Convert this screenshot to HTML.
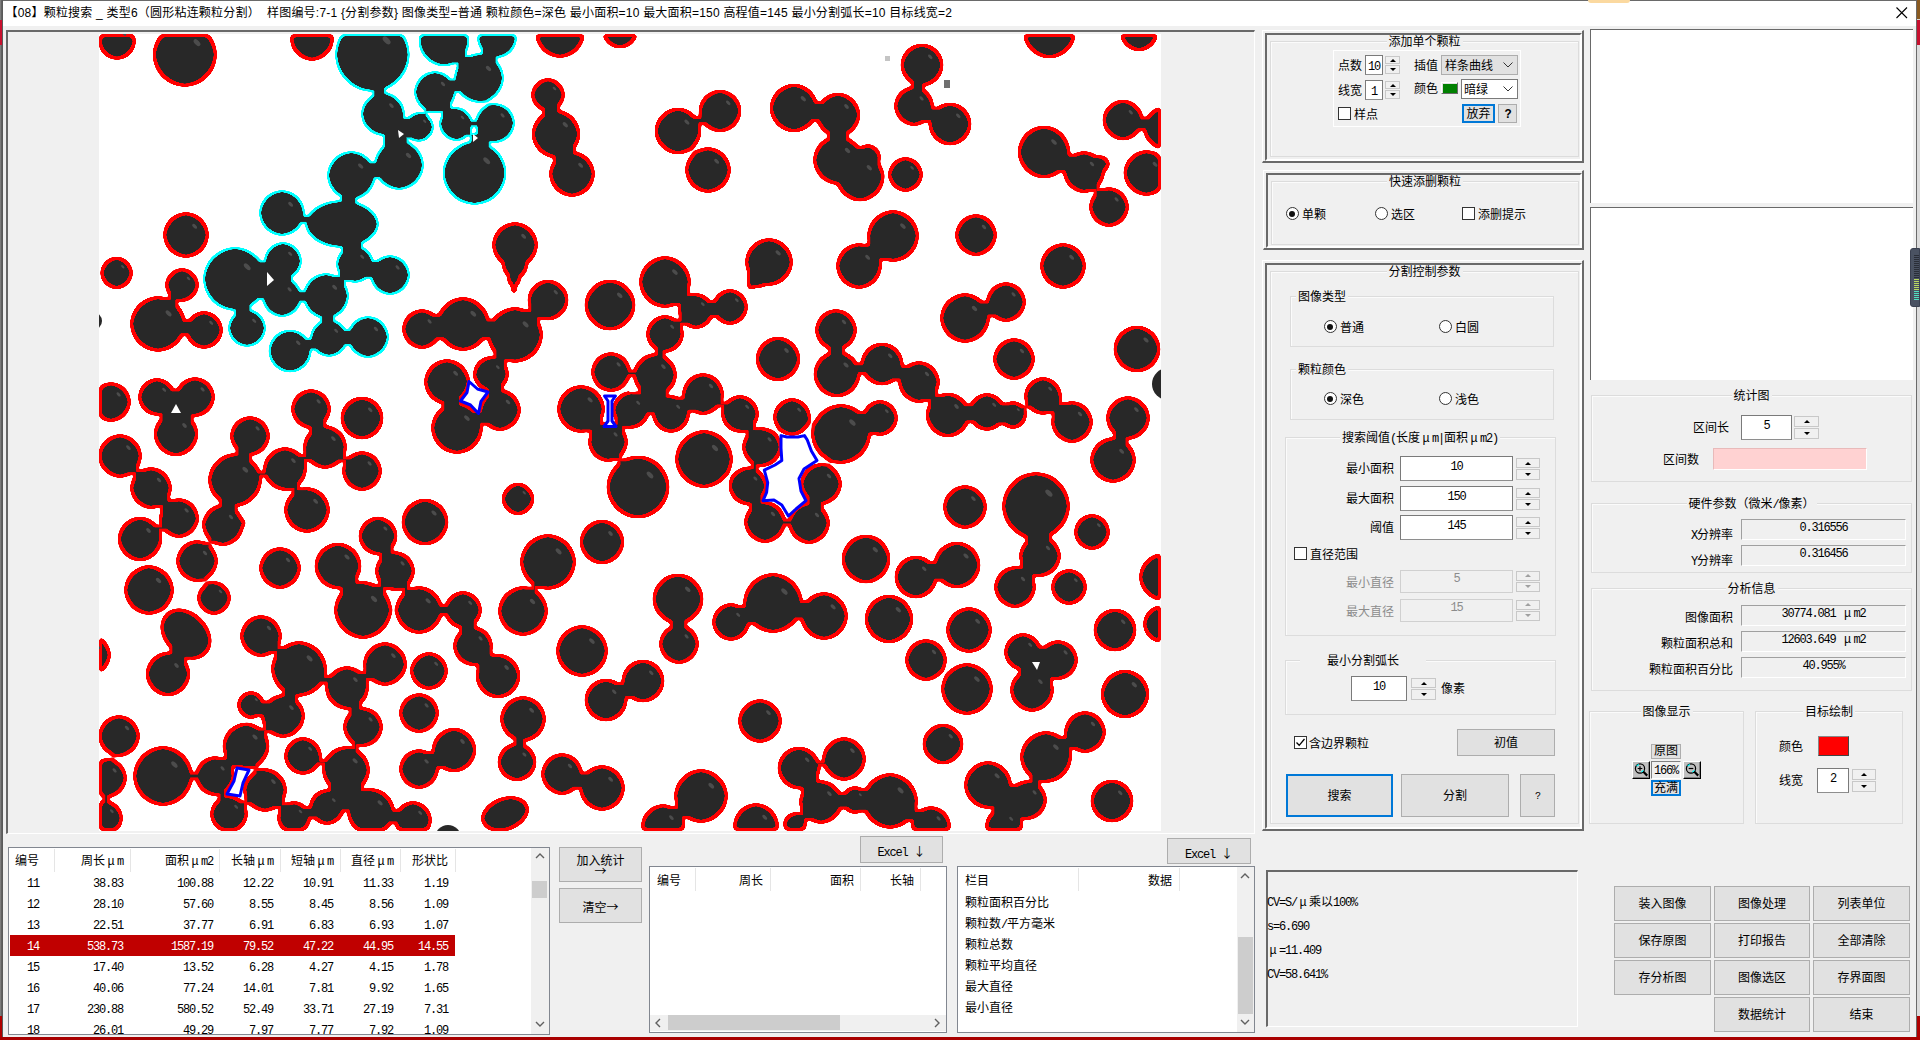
<!DOCTYPE html><html lang="zh"><head><meta charset="utf-8"><title>颗粒搜索</title><style>
html,body{margin:0;padding:0}
body{width:1920px;height:1040px;overflow:hidden;position:relative;background:#f0f0f0;font-family:"Liberation Mono","Noto Sans CJK SC",monospace;font-size:12px;color:#000}
.a{position:absolute;box-sizing:border-box}
.t{line-height:12px;white-space:nowrap;font-size:12px;padding-top:2px}
.l{letter-spacing:-1.2px}
.mu{display:inline-block;width:12px;text-align:center}
.ar{font-family:"Noto Sans CJK SC",sans-serif;letter-spacing:0}
.gb{border:1px solid #dcdcdc;box-shadow:inset 1px 1px 0 #fbfbfb}
.f3o{border-top:1px solid #fff;border-left:1px solid #fff;border-right:2px solid #696969;border-bottom:2px solid #696969}
.f3i{border-top:2px solid #696969;border-left:2px solid #696969;border-right:2px solid #fff;border-bottom:2px solid #fff}
.spb{background:#f0f0f0;border:1px solid #c8c8c8}
.ed{background:#fff;border:1px solid #7a7a7a;border-bottom-color:#8e8e8e}
.ed.dis{background:#f0f0f0;border-color:#d0d0d0;color:#8c8c8c}
.btn{background:#e1e1e1;border:1px solid #adadad;text-align:center;white-space:nowrap;font-size:12px}
.btn.foc{border:2px solid #0078d7}
.rad{border:1px solid #333;border-radius:50%;background:#fff}
.rad .dot{position:absolute;left:2.5px;top:2.5px;width:6px;height:6px;border-radius:50%;background:#111}
.chk{border:1px solid #333;background:#fff}
.sunk{border:1px solid #a0a0a0;border-right-color:#fff;border-bottom-color:#fff;background:#f0f0f0}
.lb{background:#fff;border:1px solid #828790;overflow:hidden}
.hs{position:absolute;top:2px;width:1px;height:22px;background:#e5e5e5}
</style></head><body>
<div class="a " style="left:0px;top:0px;width:3px;height:1040px;background:linear-gradient(90deg,#8a8a8a,#5a5a5a 60%,#4a4a4a)"></div>
<div class="a " style="left:0px;top:20px;width:3px;height:25px;background:#c8102e"></div>
<div class="a " style="left:0px;top:1016px;width:3px;height:24px;background:#b00000"></div>
<div class="a " style="left:0px;top:1037px;width:1920px;height:3px;background:#a80000"></div>
<div class="a " style="left:1917px;top:0px;width:3px;height:1040px;background:#dcdcdc"></div>
<div class="a " style="left:1917px;top:0px;width:3px;height:19px;background:#8a5a20"></div>
<div class="a " style="left:1917px;top:20px;width:3px;height:25px;background:#c8102e"></div>
<div class="a " style="left:1917px;top:1016px;width:3px;height:24px;background:#b00000"></div>
<div class="a " style="left:1916px;top:0px;width:1px;height:1037px;background:#6a6a6a"></div>
<div class="a " style="left:2px;top:0px;width:1px;height:1037px;background:#5a5a5a"></div>
<div class="a " style="left:3px;top:0px;width:1913px;height:26px;background:#fff;border-top:1px solid #6a6a6a"></div>
<div class="a" style="left:5.5px;top:5px;font-family:'Liberation Sans','Noto Sans CJK SC',sans-serif;font-size:12px;line-height:17px;white-space:pre;letter-spacing:0.21px" id="title">【08】颗粒搜索 _ 类型6（圆形粘连颗粒分割）  样图编号:7-1 {分割参数} 图像类型=普通 颗粒颜色=深色 最小面积=10 最大面积=150 高程值=145 最小分割弧长=10 目标线宽=2</div>
<svg class="a" style="left:1896px;top:7px" width="12" height="12" viewBox="0 0 12 12"><path d="M0.5 0.5 L11 11 M11 0.5 L0.5 11" stroke="#000" stroke-width="1.1" fill="none"/></svg>
<div class="a " style="left:1588px;top:0px;width:42px;height:3px;background:#fbd9a0;border-radius:0 0 20px 20px"></div>
<div class="a " style="left:6px;top:30px;width:1249px;height:804px;border-top:2px solid #696969;border-left:2px solid #696969;border-right:1px solid #fff;border-bottom:1px solid #fff"></div>
<svg class="a" style="left:99px;top:34px" width="1062" height="797" viewBox="99 34 1062 797">
<defs><clipPath id="ci"><rect x="99" y="34" width="1062" height="797"/></clipPath>
<filter id="gr" filterUnits="userSpaceOnUse" x="89" y="24" width="1082" height="817" color-interpolation-filters="sRGB"><feGaussianBlur in="SourceAlpha" stdDeviation="2" result="b"/><feColorMatrix in="b" type="matrix" values="0 0 0 0 0 0 0 0 0 0 0 0 0 0 0 0 0 0 20 -9.5" result="g"/><feFlood flood-color="#f00" result="c"/><feComposite in="c" in2="g" operator="in" result="o"/><feMorphology in="g" operator="erode" radius="3" result="e"/><feFlood flood-color="#282828" result="d"/><feComposite in="d" in2="e" operator="in" result="k"/><feMerge><feMergeNode in="o"/><feMergeNode in="k"/></feMerge></filter>
<filter id="gc" filterUnits="userSpaceOnUse" x="89" y="24" width="1082" height="817" color-interpolation-filters="sRGB"><feGaussianBlur in="SourceAlpha" stdDeviation="2" result="b"/><feColorMatrix in="b" type="matrix" values="0 0 0 0 0 0 0 0 0 0 0 0 0 0 0 0 0 0 20 -9.5" result="g"/><feFlood flood-color="#0ff" result="c"/><feComposite in="c" in2="g" operator="in" result="o"/><feMorphology in="g" operator="erode" radius="1.5" result="e"/><feFlood flood-color="#282828" result="d"/><feComposite in="d" in2="e" operator="in" result="k"/><feMerge><feMergeNode in="o"/><feMergeNode in="k"/></feMerge></filter>
</defs>
<rect x="99" y="34" width="1062" height="797" fill="#fff"/>
<g filter="url(#gr)"><g clip-path="url(#ci)">
<circle cx="117" cy="41" r="19"/>
<circle cx="184.8" cy="54.8" r="32.2"/>
<circle cx="312" cy="39" r="22"/>
<circle cx="186" cy="235" r="23"/>
<circle cx="560" cy="33" r="25"/>
<circle cx="620" cy="30" r="18.6"/>
<circle cx="548" cy="95" r="17"/>
<circle cx="556" cy="134" r="24.4"/>
<circle cx="572" cy="174" r="23"/>
<circle cx="678" cy="131" r="23.5"/>
<circle cx="720" cy="111" r="21.5"/>
<circle cx="708" cy="170" r="23"/>
<circle cx="794" cy="108" r="24.4"/>
<circle cx="838" cy="115" r="22.4"/>
<circle cx="838" cy="160" r="25"/>
<circle cx="860" cy="177" r="24.5"/>
<circle cx="868" cy="157" r="13"/>
<circle cx="515" cy="245" r="23"/>
<circle cx="515" cy="266" r="13"/>
<circle cx="514" cy="280" r="7"/>
<circle cx="514" cy="290" r="3.5"/>
<circle cx="922" cy="65" r="21.6"/>
<circle cx="914" cy="106" r="20"/>
<circle cx="950" cy="124" r="21.6"/>
<circle cx="905.5" cy="174.5" r="17.5"/>
<circle cx="1049.4" cy="32" r="26.6"/>
<circle cx="1139" cy="32" r="19.4"/>
<circle cx="1044" cy="152" r="26.4"/>
<circle cx="1084" cy="172" r="21"/>
<circle cx="1101" cy="164" r="9"/>
<circle cx="1109" cy="207" r="20"/>
<circle cx="1123" cy="120" r="20.6"/>
<circle cx="1165" cy="128" r="22"/>
<circle cx="1146.4" cy="173" r="23"/>
<circle cx="893" cy="236" r="26"/>
<circle cx="976" cy="235" r="21"/>
<circle cx="116.6" cy="273" r="16.4"/>
<circle cx="182" cy="285" r="17"/>
<circle cx="158" cy="324" r="28"/>
<circle cx="204" cy="330" r="19"/>
<circle cx="422" cy="329" r="20"/>
<circle cx="463" cy="324" r="27"/>
<circle cx="447" cy="382" r="23"/>
<circle cx="457" cy="428" r="26"/>
<circle cx="111" cy="402" r="20"/>
<circle cx="157" cy="397" r="19"/>
<circle cx="195" cy="397" r="20"/>
<circle cx="176" cy="434" r="22.4"/>
<circle cx="120" cy="456" r="22"/>
<circle cx="250" cy="436" r="20"/>
<circle cx="311" cy="409" r="20"/>
<circle cx="362" cy="418" r="21.6"/>
<circle cx="325" cy="447" r="22"/>
<circle cx="285" cy="469" r="22"/>
<circle cx="548" cy="300" r="20.6"/>
<circle cx="515" cy="335" r="28"/>
<circle cx="491" cy="374" r="18"/>
<circle cx="500" cy="410" r="21"/>
<circle cx="610" cy="305" r="25.6"/>
<circle cx="665" cy="282" r="26"/>
<circle cx="696" cy="311" r="18"/>
<circle cx="730" cy="307" r="18"/>
<circle cx="665" cy="334" r="19"/>
<circle cx="769" cy="262" r="24"/>
<circle cx="759" cy="276" r="12"/>
<circle cx="753" cy="283" r="6"/>
<circle cx="750" cy="287" r="3"/>
<circle cx="859" cy="266" r="23"/>
<circle cx="836" cy="330" r="21"/>
<circle cx="837" cy="374" r="23.6"/>
<circle cx="778" cy="359" r="22.4"/>
<circle cx="611" cy="372" r="20"/>
<circle cx="655" cy="375" r="22"/>
<circle cx="581" cy="409" r="24"/>
<circle cx="631" cy="410" r="19"/>
<circle cx="671" cy="414" r="19"/>
<circle cx="703" cy="394" r="21"/>
<circle cx="608" cy="442" r="20"/>
<circle cx="740" cy="414" r="19"/>
<circle cx="792" cy="417" r="19"/>
<circle cx="841" cy="434" r="30"/>
<circle cx="704" cy="459" r="29"/>
<circle cx="762" cy="447" r="20"/>
<circle cx="1063" cy="266" r="23"/>
<circle cx="965" cy="318" r="25"/>
<circle cx="1006" cy="302" r="20"/>
<circle cx="1014" cy="359" r="21"/>
<circle cx="1137" cy="349" r="23.6"/>
<circle cx="882" cy="364" r="21.6"/>
<circle cx="919" cy="382" r="21"/>
<circle cx="948" cy="415" r="22.4"/>
<circle cx="987" cy="412" r="19"/>
<circle cx="1013" cy="415" r="14"/>
<circle cx="880" cy="418" r="18"/>
<circle cx="1043" cy="396" r="19"/>
<circle cx="1072" cy="422" r="21"/>
<circle cx="1128" cy="418" r="22"/>
<circle cx="1113" cy="460" r="23"/>
<circle cx="151" cy="488" r="21"/>
<circle cx="179" cy="518" r="20"/>
<circle cx="140" cy="539" r="22.4"/>
<circle cx="235" cy="480" r="27"/>
<circle cx="223" cy="525" r="21"/>
<circle cx="241" cy="523" r="5"/>
<circle cx="197" cy="561" r="21"/>
<circle cx="362" cy="471" r="20"/>
<circle cx="307" cy="510" r="23"/>
<circle cx="280" cy="568" r="21"/>
<circle cx="425" cy="522" r="23.6"/>
<circle cx="378" cy="536" r="19.6"/>
<circle cx="338" cy="566" r="23.6"/>
<circle cx="395" cy="571" r="20"/>
<circle cx="363" cy="610" r="29"/>
<circle cx="419" cy="610" r="24"/>
<circle cx="463" cy="610" r="19"/>
<circle cx="473" cy="646" r="20"/>
<circle cx="149" cy="590" r="25"/>
<circle cx="214" cy="598" r="17"/>
<circle cx="261" cy="636" r="21"/>
<circle cx="299" cy="669" r="28"/>
<circle cx="385" cy="664" r="22"/>
<circle cx="90" cy="655" r="21"/>
<circle cx="638" cy="487" r="31.6"/>
<circle cx="518" cy="499" r="16.4"/>
<circle cx="748" cy="486" r="19.5"/>
<circle cx="765" cy="522" r="21"/>
<circle cx="809" cy="523" r="21"/>
<circle cx="821" cy="484" r="21"/>
<circle cx="866" cy="559" r="24.5"/>
<circle cx="548" cy="562" r="28"/>
<circle cx="602" cy="542" r="22.4"/>
<circle cx="523" cy="611" r="25"/>
<circle cx="582" cy="651" r="26"/>
<circle cx="678" cy="599" r="25.6"/>
<circle cx="679" cy="644" r="20"/>
<circle cx="731" cy="622" r="19"/>
<circle cx="773" cy="603" r="30"/>
<circle cx="824" cy="616" r="24"/>
<circle cx="965" cy="507" r="22"/>
<circle cx="1036" cy="506" r="34"/>
<circle cx="1040" cy="556" r="21"/>
<circle cx="1015" cy="587" r="21"/>
<circle cx="1092" cy="532" r="18"/>
<circle cx="1069" cy="587" r="18"/>
<circle cx="916" cy="577" r="21.6"/>
<circle cx="957" cy="565" r="23.6"/>
<circle cx="889" cy="619" r="24.4"/>
<circle cx="969" cy="630" r="23"/>
<circle cx="926" cy="660" r="21"/>
<circle cx="1023" cy="652" r="19"/>
<circle cx="1058" cy="660" r="20"/>
<circle cx="1115" cy="630" r="21.6"/>
<circle cx="1163" cy="577" r="24"/>
<circle cx="1162" cy="624" r="19"/>
<circle cx="168" cy="674" r="22.4"/>
<circle cx="119" cy="736" r="21"/>
<circle cx="107" cy="778" r="20"/>
<circle cx="105" cy="818" r="18"/>
<circle cx="163" cy="776" r="30"/>
<circle cx="246" cy="746" r="23.6"/>
<circle cx="215" cy="776" r="20"/>
<circle cx="265" cy="790" r="22"/>
<circle cx="229" cy="814" r="19"/>
<circle cx="251" cy="705" r="14"/>
<circle cx="283" cy="716" r="22"/>
<circle cx="347" cy="688" r="22"/>
<circle cx="429" cy="671" r="19"/>
<circle cx="363" cy="727" r="20"/>
<circle cx="303" cy="756" r="19"/>
<circle cx="346" cy="770" r="24"/>
<circle cx="327" cy="807" r="18"/>
<circle cx="419" cy="713" r="20"/>
<circle cx="454" cy="750" r="22.4"/>
<circle cx="419" cy="769" r="20"/>
<circle cx="294" cy="818" r="17"/>
<circle cx="371" cy="812" r="24"/>
<circle cx="413" cy="820" r="19"/>
<circle cx="498" cy="676" r="22.5"/>
<circle cx="523" cy="719" r="23"/>
<circle cx="517" cy="762" r="19.6"/>
<circle cx="606" cy="700" r="21.6"/>
<circle cx="643" cy="681" r="21.6"/>
<circle cx="760" cy="721" r="22"/>
<circle cx="562" cy="774" r="21"/>
<circle cx="602" cy="788" r="23"/>
<circle cx="701" cy="796" r="27"/>
<circle cx="663" cy="826" r="22"/>
<circle cx="756" cy="826" r="23"/>
<circle cx="799" cy="768" r="21.6"/>
<circle cx="844" cy="759" r="22"/>
<circle cx="821" cy="802" r="22"/>
<circle cx="855" cy="800" r="14"/>
<circle cx="795" cy="824" r="12"/>
<circle cx="652" cy="400" r="8"/>
<circle cx="176" cy="410" r="7"/>
<circle cx="1036" cy="666" r="5"/>
<circle cx="347" cy="798" r="6"/>
<circle cx="1005" cy="804" r="5"/>
<circle cx="967" cy="689" r="26"/>
<circle cx="1032" cy="690" r="22"/>
<circle cx="1125" cy="694" r="24.4"/>
<circle cx="943" cy="744" r="20.6"/>
<circle cx="1085" cy="732" r="21"/>
<circle cx="1046" cy="757" r="26"/>
<circle cx="988" cy="785" r="24"/>
<circle cx="1027" cy="800" r="20"/>
<circle cx="1004" cy="826" r="19"/>
<circle cx="1112" cy="801" r="21.6"/>
<circle cx="890" cy="801" r="28"/>
<circle cx="931" cy="826" r="20"/>
<ellipse cx="505" cy="814" rx="25" ry="17" transform="rotate(-20 505 814)"/>
<ellipse cx="186" cy="634" rx="29" ry="22" transform="rotate(45 186 634)"/>
</g></g>
<g filter="url(#gc)"><g clip-path="url(#ci)">
<circle cx="372.4" cy="54.6" r="37.4"/>
<circle cx="444" cy="41" r="25.5"/>
<circle cx="497" cy="38" r="20"/>
<circle cx="435" cy="92" r="21"/>
<circle cx="383" cy="114" r="22"/>
<circle cx="419" cy="127" r="15"/>
<circle cx="399" cy="165" r="25"/>
<circle cx="395" cy="142" r="12"/>
<circle cx="351.4" cy="175.4" r="24.4"/>
<circle cx="282" cy="213" r="23"/>
<circle cx="456" cy="124" r="17"/>
<circle cx="474.5" cy="173" r="32"/>
<circle cx="479" cy="78" r="25"/>
<circle cx="495" cy="123" r="20"/>
<circle cx="235" cy="279" r="32"/>
<circle cx="283" cy="261" r="19"/>
<circle cx="282" cy="297" r="20"/>
<circle cx="247" cy="328" r="19"/>
<circle cx="326" cy="296" r="23"/>
<circle cx="355" cy="264" r="19"/>
<circle cx="390" cy="275" r="20"/>
<circle cx="329" cy="338" r="19"/>
<circle cx="290" cy="351" r="21.6"/>
<circle cx="368" cy="337" r="21"/>
<circle cx="270" cy="279" r="6"/>
<circle cx="400" cy="134" r="5"/>
<circle cx="475" cy="138" r="5"/>
<ellipse cx="342" cy="224" rx="37" ry="24" transform="rotate(0 342 224)"/>
</g></g>
<g fill="#282828">
<circle cx="93" cy="321" r="9"/>
<circle cx="1168" cy="384" r="16"/>
<circle cx="448" cy="838" r="13"/>
</g>
<g fill="#4c4c4c">
<ellipse cx="124.2" cy="33.8" rx="2.5" ry="1.3" transform="rotate(45 124.2 33.8)"/>
<ellipse cx="197" cy="42.6" rx="4.2" ry="2.3" transform="rotate(45 197 42.6)"/>
<ellipse cx="320.4" cy="30.6" rx="2.9" ry="1.5" transform="rotate(45 320.4 30.6)"/>
<ellipse cx="194.7" cy="226.3" rx="3" ry="1.6" transform="rotate(45 194.7 226.3)"/>
<ellipse cx="569.5" cy="23.5" rx="3.2" ry="1.8" transform="rotate(45 569.5 23.5)"/>
<ellipse cx="627.1" cy="22.9" rx="2.4" ry="1.3" transform="rotate(45 627.1 22.9)"/>
<ellipse cx="554.5" cy="88.5" rx="2.2" ry="1.2" transform="rotate(45 554.5 88.5)"/>
<ellipse cx="565.3" cy="124.7" rx="3.2" ry="1.7" transform="rotate(45 565.3 124.7)"/>
<ellipse cx="580.7" cy="165.3" rx="3" ry="1.6" transform="rotate(45 580.7 165.3)"/>
<ellipse cx="686.9" cy="122.1" rx="3.1" ry="1.6" transform="rotate(45 686.9 122.1)"/>
<ellipse cx="728.2" cy="102.8" rx="2.8" ry="1.5" transform="rotate(45 728.2 102.8)"/>
<ellipse cx="716.7" cy="161.3" rx="3" ry="1.6" transform="rotate(45 716.7 161.3)"/>
<ellipse cx="803.3" cy="98.7" rx="3.2" ry="1.7" transform="rotate(45 803.3 98.7)"/>
<ellipse cx="846.5" cy="106.5" rx="2.9" ry="1.6" transform="rotate(45 846.5 106.5)"/>
<ellipse cx="847.5" cy="150.5" rx="3.2" ry="1.8" transform="rotate(45 847.5 150.5)"/>
<ellipse cx="869.3" cy="167.7" rx="3.2" ry="1.7" transform="rotate(45 869.3 167.7)"/>
<ellipse cx="523.7" cy="236.3" rx="3" ry="1.6" transform="rotate(45 523.7 236.3)"/>
<ellipse cx="930.2" cy="56.8" rx="2.8" ry="1.5" transform="rotate(45 930.2 56.8)"/>
<ellipse cx="921.6" cy="98.4" rx="2.6" ry="1.4" transform="rotate(45 921.6 98.4)"/>
<ellipse cx="958.2" cy="115.8" rx="2.8" ry="1.5" transform="rotate(45 958.2 115.8)"/>
<ellipse cx="912.1" cy="167.8" rx="2.3" ry="1.2" transform="rotate(45 912.1 167.8)"/>
<ellipse cx="1059.5" cy="21.9" rx="3.5" ry="1.9" transform="rotate(45 1059.5 21.9)"/>
<ellipse cx="1146.4" cy="24.6" rx="2.5" ry="1.4" transform="rotate(45 1146.4 24.6)"/>
<ellipse cx="1054" cy="142" rx="3.4" ry="1.8" transform="rotate(45 1054 142)"/>
<ellipse cx="1092" cy="164" rx="2.7" ry="1.5" transform="rotate(45 1092 164)"/>
<ellipse cx="1116.6" cy="199.4" rx="2.6" ry="1.4" transform="rotate(45 1116.6 199.4)"/>
<ellipse cx="1130.8" cy="112.2" rx="2.7" ry="1.4" transform="rotate(45 1130.8 112.2)"/>
<ellipse cx="1173.4" cy="119.6" rx="2.9" ry="1.5" transform="rotate(45 1173.4 119.6)"/>
<ellipse cx="1155.1" cy="164.3" rx="3" ry="1.6" transform="rotate(45 1155.1 164.3)"/>
<ellipse cx="902.9" cy="226.1" rx="3.4" ry="1.8" transform="rotate(45 902.9 226.1)"/>
<ellipse cx="984" cy="227" rx="2.7" ry="1.5" transform="rotate(45 984 227)"/>
<ellipse cx="122.8" cy="266.8" rx="2.1" ry="1.1" transform="rotate(45 122.8 266.8)"/>
<ellipse cx="188.5" cy="278.5" rx="2.2" ry="1.2" transform="rotate(45 188.5 278.5)"/>
<ellipse cx="168.6" cy="313.4" rx="3.6" ry="2" transform="rotate(45 168.6 313.4)"/>
<ellipse cx="211.2" cy="322.8" rx="2.5" ry="1.3" transform="rotate(45 211.2 322.8)"/>
<ellipse cx="429.6" cy="321.4" rx="2.6" ry="1.4" transform="rotate(45 429.6 321.4)"/>
<ellipse cx="473.3" cy="313.7" rx="3.5" ry="1.9" transform="rotate(45 473.3 313.7)"/>
<ellipse cx="455.7" cy="373.3" rx="3" ry="1.6" transform="rotate(45 455.7 373.3)"/>
<ellipse cx="466.9" cy="418.1" rx="3.4" ry="1.8" transform="rotate(45 466.9 418.1)"/>
<ellipse cx="118.6" cy="394.4" rx="2.6" ry="1.4" transform="rotate(45 118.6 394.4)"/>
<ellipse cx="164.2" cy="389.8" rx="2.5" ry="1.3" transform="rotate(45 164.2 389.8)"/>
<ellipse cx="202.6" cy="389.4" rx="2.6" ry="1.4" transform="rotate(45 202.6 389.4)"/>
<ellipse cx="184.5" cy="425.5" rx="2.9" ry="1.6" transform="rotate(45 184.5 425.5)"/>
<ellipse cx="128.4" cy="447.6" rx="2.9" ry="1.5" transform="rotate(45 128.4 447.6)"/>
<ellipse cx="257.6" cy="428.4" rx="2.6" ry="1.4" transform="rotate(45 257.6 428.4)"/>
<ellipse cx="318.6" cy="401.4" rx="2.6" ry="1.4" transform="rotate(45 318.6 401.4)"/>
<ellipse cx="370.2" cy="409.8" rx="2.8" ry="1.5" transform="rotate(45 370.2 409.8)"/>
<ellipse cx="333.4" cy="438.6" rx="2.9" ry="1.5" transform="rotate(45 333.4 438.6)"/>
<ellipse cx="293.4" cy="460.6" rx="2.9" ry="1.5" transform="rotate(45 293.4 460.6)"/>
<ellipse cx="555.8" cy="292.2" rx="2.7" ry="1.4" transform="rotate(45 555.8 292.2)"/>
<ellipse cx="525.6" cy="324.4" rx="3.6" ry="2" transform="rotate(45 525.6 324.4)"/>
<ellipse cx="497.8" cy="367.2" rx="2.3" ry="1.3" transform="rotate(45 497.8 367.2)"/>
<ellipse cx="508" cy="402" rx="2.7" ry="1.5" transform="rotate(45 508 402)"/>
<ellipse cx="619.7" cy="295.3" rx="3.3" ry="1.8" transform="rotate(45 619.7 295.3)"/>
<ellipse cx="674.9" cy="272.1" rx="3.4" ry="1.8" transform="rotate(45 674.9 272.1)"/>
<ellipse cx="702.8" cy="304.2" rx="2.3" ry="1.3" transform="rotate(45 702.8 304.2)"/>
<ellipse cx="736.8" cy="300.2" rx="2.3" ry="1.3" transform="rotate(45 736.8 300.2)"/>
<ellipse cx="672.2" cy="326.8" rx="2.5" ry="1.3" transform="rotate(45 672.2 326.8)"/>
<ellipse cx="778.1" cy="252.9" rx="3.1" ry="1.7" transform="rotate(45 778.1 252.9)"/>
<ellipse cx="867.7" cy="257.3" rx="3" ry="1.6" transform="rotate(45 867.7 257.3)"/>
<ellipse cx="844" cy="322" rx="2.7" ry="1.5" transform="rotate(45 844 322)"/>
<ellipse cx="846" cy="365" rx="3.1" ry="1.7" transform="rotate(45 846 365)"/>
<ellipse cx="786.5" cy="350.5" rx="2.9" ry="1.6" transform="rotate(45 786.5 350.5)"/>
<ellipse cx="618.6" cy="364.4" rx="2.6" ry="1.4" transform="rotate(45 618.6 364.4)"/>
<ellipse cx="663.4" cy="366.6" rx="2.9" ry="1.5" transform="rotate(45 663.4 366.6)"/>
<ellipse cx="590.1" cy="399.9" rx="3.1" ry="1.7" transform="rotate(45 590.1 399.9)"/>
<ellipse cx="638.2" cy="402.8" rx="2.5" ry="1.3" transform="rotate(45 638.2 402.8)"/>
<ellipse cx="678.2" cy="406.8" rx="2.5" ry="1.3" transform="rotate(45 678.2 406.8)"/>
<ellipse cx="711" cy="386" rx="2.7" ry="1.5" transform="rotate(45 711 386)"/>
<ellipse cx="615.6" cy="434.4" rx="2.6" ry="1.4" transform="rotate(45 615.6 434.4)"/>
<ellipse cx="747.2" cy="406.8" rx="2.5" ry="1.3" transform="rotate(45 747.2 406.8)"/>
<ellipse cx="799.2" cy="409.8" rx="2.5" ry="1.3" transform="rotate(45 799.2 409.8)"/>
<ellipse cx="852.4" cy="422.6" rx="3.9" ry="2.1" transform="rotate(45 852.4 422.6)"/>
<ellipse cx="715" cy="448" rx="3.8" ry="2" transform="rotate(45 715 448)"/>
<ellipse cx="769.6" cy="439.4" rx="2.6" ry="1.4" transform="rotate(45 769.6 439.4)"/>
<ellipse cx="1071.7" cy="257.3" rx="3" ry="1.6" transform="rotate(45 1071.7 257.3)"/>
<ellipse cx="974.5" cy="308.5" rx="3.2" ry="1.8" transform="rotate(45 974.5 308.5)"/>
<ellipse cx="1013.6" cy="294.4" rx="2.6" ry="1.4" transform="rotate(45 1013.6 294.4)"/>
<ellipse cx="1022" cy="351" rx="2.7" ry="1.5" transform="rotate(45 1022 351)"/>
<ellipse cx="1146" cy="340" rx="3.1" ry="1.7" transform="rotate(45 1146 340)"/>
<ellipse cx="890.2" cy="355.8" rx="2.8" ry="1.5" transform="rotate(45 890.2 355.8)"/>
<ellipse cx="927" cy="374" rx="2.7" ry="1.5" transform="rotate(45 927 374)"/>
<ellipse cx="956.5" cy="406.5" rx="2.9" ry="1.6" transform="rotate(45 956.5 406.5)"/>
<ellipse cx="994.2" cy="404.8" rx="2.5" ry="1.3" transform="rotate(45 994.2 404.8)"/>
<ellipse cx="1018.3" cy="409.7" rx="1.8" ry="1" transform="rotate(45 1018.3 409.7)"/>
<ellipse cx="886.8" cy="411.2" rx="2.3" ry="1.3" transform="rotate(45 886.8 411.2)"/>
<ellipse cx="1050.2" cy="388.8" rx="2.5" ry="1.3" transform="rotate(45 1050.2 388.8)"/>
<ellipse cx="1080" cy="414" rx="2.7" ry="1.5" transform="rotate(45 1080 414)"/>
<ellipse cx="1136.4" cy="409.6" rx="2.9" ry="1.5" transform="rotate(45 1136.4 409.6)"/>
<ellipse cx="1121.7" cy="451.3" rx="3" ry="1.6" transform="rotate(45 1121.7 451.3)"/>
<ellipse cx="159" cy="480" rx="2.7" ry="1.5" transform="rotate(45 159 480)"/>
<ellipse cx="186.6" cy="510.4" rx="2.6" ry="1.4" transform="rotate(45 186.6 510.4)"/>
<ellipse cx="148.5" cy="530.5" rx="2.9" ry="1.6" transform="rotate(45 148.5 530.5)"/>
<ellipse cx="245.3" cy="469.7" rx="3.5" ry="1.9" transform="rotate(45 245.3 469.7)"/>
<ellipse cx="231" cy="517" rx="2.7" ry="1.5" transform="rotate(45 231 517)"/>
<ellipse cx="205" cy="553" rx="2.7" ry="1.5" transform="rotate(45 205 553)"/>
<ellipse cx="369.6" cy="463.4" rx="2.6" ry="1.4" transform="rotate(45 369.6 463.4)"/>
<ellipse cx="315.7" cy="501.3" rx="3" ry="1.6" transform="rotate(45 315.7 501.3)"/>
<ellipse cx="288" cy="560" rx="2.7" ry="1.5" transform="rotate(45 288 560)"/>
<ellipse cx="434" cy="513" rx="3.1" ry="1.7" transform="rotate(45 434 513)"/>
<ellipse cx="385.4" cy="528.6" rx="2.5" ry="1.4" transform="rotate(45 385.4 528.6)"/>
<ellipse cx="347" cy="557" rx="3.1" ry="1.7" transform="rotate(45 347 557)"/>
<ellipse cx="402.6" cy="563.4" rx="2.6" ry="1.4" transform="rotate(45 402.6 563.4)"/>
<ellipse cx="374" cy="599" rx="3.8" ry="2" transform="rotate(45 374 599)"/>
<ellipse cx="428.1" cy="600.9" rx="3.1" ry="1.7" transform="rotate(45 428.1 600.9)"/>
<ellipse cx="470.2" cy="602.8" rx="2.5" ry="1.3" transform="rotate(45 470.2 602.8)"/>
<ellipse cx="480.6" cy="638.4" rx="2.6" ry="1.4" transform="rotate(45 480.6 638.4)"/>
<ellipse cx="158.5" cy="580.5" rx="3.2" ry="1.8" transform="rotate(45 158.5 580.5)"/>
<ellipse cx="220.5" cy="591.5" rx="2.2" ry="1.2" transform="rotate(45 220.5 591.5)"/>
<ellipse cx="269" cy="628" rx="2.7" ry="1.5" transform="rotate(45 269 628)"/>
<ellipse cx="309.6" cy="658.4" rx="3.6" ry="2" transform="rotate(45 309.6 658.4)"/>
<ellipse cx="393.4" cy="655.6" rx="2.9" ry="1.5" transform="rotate(45 393.4 655.6)"/>
<ellipse cx="98" cy="647" rx="2.7" ry="1.5" transform="rotate(45 98 647)"/>
<ellipse cx="650" cy="475" rx="4.1" ry="2.2" transform="rotate(45 650 475)"/>
<ellipse cx="524.2" cy="492.8" rx="2.1" ry="1.1" transform="rotate(45 524.2 492.8)"/>
<ellipse cx="755.4" cy="478.6" rx="2.5" ry="1.4" transform="rotate(45 755.4 478.6)"/>
<ellipse cx="773" cy="514" rx="2.7" ry="1.5" transform="rotate(45 773 514)"/>
<ellipse cx="817" cy="515" rx="2.7" ry="1.5" transform="rotate(45 817 515)"/>
<ellipse cx="829" cy="476" rx="2.7" ry="1.5" transform="rotate(45 829 476)"/>
<ellipse cx="875.3" cy="549.7" rx="3.2" ry="1.7" transform="rotate(45 875.3 549.7)"/>
<ellipse cx="558.6" cy="551.4" rx="3.6" ry="2" transform="rotate(45 558.6 551.4)"/>
<ellipse cx="610.5" cy="533.5" rx="2.9" ry="1.6" transform="rotate(45 610.5 533.5)"/>
<ellipse cx="532.5" cy="601.5" rx="3.2" ry="1.8" transform="rotate(45 532.5 601.5)"/>
<ellipse cx="591.9" cy="641.1" rx="3.4" ry="1.8" transform="rotate(45 591.9 641.1)"/>
<ellipse cx="687.7" cy="589.3" rx="3.3" ry="1.8" transform="rotate(45 687.7 589.3)"/>
<ellipse cx="686.6" cy="636.4" rx="2.6" ry="1.4" transform="rotate(45 686.6 636.4)"/>
<ellipse cx="738.2" cy="614.8" rx="2.5" ry="1.3" transform="rotate(45 738.2 614.8)"/>
<ellipse cx="784.4" cy="591.6" rx="3.9" ry="2.1" transform="rotate(45 784.4 591.6)"/>
<ellipse cx="833.1" cy="606.9" rx="3.1" ry="1.7" transform="rotate(45 833.1 606.9)"/>
<ellipse cx="973.4" cy="498.6" rx="2.9" ry="1.5" transform="rotate(45 973.4 498.6)"/>
<ellipse cx="1048.9" cy="493.1" rx="4.4" ry="2.4" transform="rotate(45 1048.9 493.1)"/>
<ellipse cx="1048" cy="548" rx="2.7" ry="1.5" transform="rotate(45 1048 548)"/>
<ellipse cx="1023" cy="579" rx="2.7" ry="1.5" transform="rotate(45 1023 579)"/>
<ellipse cx="1098.8" cy="525.2" rx="2.3" ry="1.3" transform="rotate(45 1098.8 525.2)"/>
<ellipse cx="1075.8" cy="580.2" rx="2.3" ry="1.3" transform="rotate(45 1075.8 580.2)"/>
<ellipse cx="924.2" cy="568.8" rx="2.8" ry="1.5" transform="rotate(45 924.2 568.8)"/>
<ellipse cx="966" cy="556" rx="3.1" ry="1.7" transform="rotate(45 966 556)"/>
<ellipse cx="898.3" cy="609.7" rx="3.2" ry="1.7" transform="rotate(45 898.3 609.7)"/>
<ellipse cx="977.7" cy="621.3" rx="3" ry="1.6" transform="rotate(45 977.7 621.3)"/>
<ellipse cx="934" cy="652" rx="2.7" ry="1.5" transform="rotate(45 934 652)"/>
<ellipse cx="1030.2" cy="644.8" rx="2.5" ry="1.3" transform="rotate(45 1030.2 644.8)"/>
<ellipse cx="1065.6" cy="652.4" rx="2.6" ry="1.4" transform="rotate(45 1065.6 652.4)"/>
<ellipse cx="1123.2" cy="621.8" rx="2.8" ry="1.5" transform="rotate(45 1123.2 621.8)"/>
<ellipse cx="1172.1" cy="567.9" rx="3.1" ry="1.7" transform="rotate(45 1172.1 567.9)"/>
<ellipse cx="1169.2" cy="616.8" rx="2.5" ry="1.3" transform="rotate(45 1169.2 616.8)"/>
<ellipse cx="176.5" cy="665.5" rx="2.9" ry="1.6" transform="rotate(45 176.5 665.5)"/>
<ellipse cx="127" cy="728" rx="2.7" ry="1.5" transform="rotate(45 127 728)"/>
<ellipse cx="114.6" cy="770.4" rx="2.6" ry="1.4" transform="rotate(45 114.6 770.4)"/>
<ellipse cx="111.8" cy="811.2" rx="2.3" ry="1.3" transform="rotate(45 111.8 811.2)"/>
<ellipse cx="174.4" cy="764.6" rx="3.9" ry="2.1" transform="rotate(45 174.4 764.6)"/>
<ellipse cx="255" cy="737" rx="3.1" ry="1.7" transform="rotate(45 255 737)"/>
<ellipse cx="222.6" cy="768.4" rx="2.6" ry="1.4" transform="rotate(45 222.6 768.4)"/>
<ellipse cx="273.4" cy="781.6" rx="2.9" ry="1.5" transform="rotate(45 273.4 781.6)"/>
<ellipse cx="236.2" cy="806.8" rx="2.5" ry="1.3" transform="rotate(45 236.2 806.8)"/>
<ellipse cx="256.3" cy="699.7" rx="1.8" ry="1" transform="rotate(45 256.3 699.7)"/>
<ellipse cx="291.4" cy="707.6" rx="2.9" ry="1.5" transform="rotate(45 291.4 707.6)"/>
<ellipse cx="355.4" cy="679.6" rx="2.9" ry="1.5" transform="rotate(45 355.4 679.6)"/>
<ellipse cx="436.2" cy="663.8" rx="2.5" ry="1.3" transform="rotate(45 436.2 663.8)"/>
<ellipse cx="370.6" cy="719.4" rx="2.6" ry="1.4" transform="rotate(45 370.6 719.4)"/>
<ellipse cx="310.2" cy="748.8" rx="2.5" ry="1.3" transform="rotate(45 310.2 748.8)"/>
<ellipse cx="355.1" cy="760.9" rx="3.1" ry="1.7" transform="rotate(45 355.1 760.9)"/>
<ellipse cx="333.8" cy="800.2" rx="2.3" ry="1.3" transform="rotate(45 333.8 800.2)"/>
<ellipse cx="426.6" cy="705.4" rx="2.6" ry="1.4" transform="rotate(45 426.6 705.4)"/>
<ellipse cx="462.5" cy="741.5" rx="2.9" ry="1.6" transform="rotate(45 462.5 741.5)"/>
<ellipse cx="426.6" cy="761.4" rx="2.6" ry="1.4" transform="rotate(45 426.6 761.4)"/>
<ellipse cx="300.5" cy="811.5" rx="2.2" ry="1.2" transform="rotate(45 300.5 811.5)"/>
<ellipse cx="380.1" cy="802.9" rx="3.1" ry="1.7" transform="rotate(45 380.1 802.9)"/>
<ellipse cx="420.2" cy="812.8" rx="2.5" ry="1.3" transform="rotate(45 420.2 812.8)"/>
<ellipse cx="506.6" cy="667.5" rx="2.9" ry="1.6" transform="rotate(45 506.6 667.5)"/>
<ellipse cx="531.7" cy="710.3" rx="3" ry="1.6" transform="rotate(45 531.7 710.3)"/>
<ellipse cx="524.4" cy="754.6" rx="2.5" ry="1.4" transform="rotate(45 524.4 754.6)"/>
<ellipse cx="614.2" cy="691.8" rx="2.8" ry="1.5" transform="rotate(45 614.2 691.8)"/>
<ellipse cx="651.2" cy="672.8" rx="2.8" ry="1.5" transform="rotate(45 651.2 672.8)"/>
<ellipse cx="768.4" cy="712.6" rx="2.9" ry="1.5" transform="rotate(45 768.4 712.6)"/>
<ellipse cx="570" cy="766" rx="2.7" ry="1.5" transform="rotate(45 570 766)"/>
<ellipse cx="610.7" cy="779.3" rx="3" ry="1.6" transform="rotate(45 610.7 779.3)"/>
<ellipse cx="711.3" cy="785.7" rx="3.5" ry="1.9" transform="rotate(45 711.3 785.7)"/>
<ellipse cx="671.4" cy="817.6" rx="2.9" ry="1.5" transform="rotate(45 671.4 817.6)"/>
<ellipse cx="764.7" cy="817.3" rx="3" ry="1.6" transform="rotate(45 764.7 817.3)"/>
<ellipse cx="807.2" cy="759.8" rx="2.8" ry="1.5" transform="rotate(45 807.2 759.8)"/>
<ellipse cx="852.4" cy="750.6" rx="2.9" ry="1.5" transform="rotate(45 852.4 750.6)"/>
<ellipse cx="829.4" cy="793.6" rx="2.9" ry="1.5" transform="rotate(45 829.4 793.6)"/>
<ellipse cx="860.3" cy="794.7" rx="1.8" ry="1" transform="rotate(45 860.3 794.7)"/>
<ellipse cx="976.9" cy="679.1" rx="3.4" ry="1.8" transform="rotate(45 976.9 679.1)"/>
<ellipse cx="1040.4" cy="681.6" rx="2.9" ry="1.5" transform="rotate(45 1040.4 681.6)"/>
<ellipse cx="1134.3" cy="684.7" rx="3.2" ry="1.7" transform="rotate(45 1134.3 684.7)"/>
<ellipse cx="950.8" cy="736.2" rx="2.7" ry="1.4" transform="rotate(45 950.8 736.2)"/>
<ellipse cx="1093" cy="724" rx="2.7" ry="1.5" transform="rotate(45 1093 724)"/>
<ellipse cx="1055.9" cy="747.1" rx="3.4" ry="1.8" transform="rotate(45 1055.9 747.1)"/>
<ellipse cx="997.1" cy="775.9" rx="3.1" ry="1.7" transform="rotate(45 997.1 775.9)"/>
<ellipse cx="1034.6" cy="792.4" rx="2.6" ry="1.4" transform="rotate(45 1034.6 792.4)"/>
<ellipse cx="1011.2" cy="818.8" rx="2.5" ry="1.3" transform="rotate(45 1011.2 818.8)"/>
<ellipse cx="1120.2" cy="792.8" rx="2.8" ry="1.5" transform="rotate(45 1120.2 792.8)"/>
<ellipse cx="900.6" cy="790.4" rx="3.6" ry="2" transform="rotate(45 900.6 790.4)"/>
<ellipse cx="938.6" cy="818.4" rx="2.6" ry="1.4" transform="rotate(45 938.6 818.4)"/>
<ellipse cx="386.6" cy="40.4" rx="4.9" ry="2.6" transform="rotate(45 386.6 40.4)"/>
<ellipse cx="453.7" cy="31.3" rx="3.3" ry="1.8" transform="rotate(45 453.7 31.3)"/>
<ellipse cx="504.6" cy="30.4" rx="2.6" ry="1.4" transform="rotate(45 504.6 30.4)"/>
<ellipse cx="443" cy="84" rx="2.7" ry="1.5" transform="rotate(45 443 84)"/>
<ellipse cx="391.4" cy="105.6" rx="2.9" ry="1.5" transform="rotate(45 391.4 105.6)"/>
<ellipse cx="424.7" cy="121.3" rx="2" ry="1.1" transform="rotate(45 424.7 121.3)"/>
<ellipse cx="408.5" cy="155.5" rx="3.2" ry="1.8" transform="rotate(45 408.5 155.5)"/>
<ellipse cx="360.7" cy="166.1" rx="3.2" ry="1.7" transform="rotate(45 360.7 166.1)"/>
<ellipse cx="290.7" cy="204.3" rx="3" ry="1.6" transform="rotate(45 290.7 204.3)"/>
<ellipse cx="462.5" cy="117.5" rx="2.2" ry="1.2" transform="rotate(45 462.5 117.5)"/>
<ellipse cx="486.7" cy="160.8" rx="4.2" ry="2.2" transform="rotate(45 486.7 160.8)"/>
<ellipse cx="488.5" cy="68.5" rx="3.2" ry="1.8" transform="rotate(45 488.5 68.5)"/>
<ellipse cx="502.6" cy="115.4" rx="2.6" ry="1.4" transform="rotate(45 502.6 115.4)"/>
<ellipse cx="247.2" cy="266.8" rx="4.2" ry="2.2" transform="rotate(45 247.2 266.8)"/>
<ellipse cx="290.2" cy="253.8" rx="2.5" ry="1.3" transform="rotate(45 290.2 253.8)"/>
<ellipse cx="289.6" cy="289.4" rx="2.6" ry="1.4" transform="rotate(45 289.6 289.4)"/>
<ellipse cx="254.2" cy="320.8" rx="2.5" ry="1.3" transform="rotate(45 254.2 320.8)"/>
<ellipse cx="334.7" cy="287.3" rx="3" ry="1.6" transform="rotate(45 334.7 287.3)"/>
<ellipse cx="362.2" cy="256.8" rx="2.5" ry="1.3" transform="rotate(45 362.2 256.8)"/>
<ellipse cx="397.6" cy="267.4" rx="2.6" ry="1.4" transform="rotate(45 397.6 267.4)"/>
<ellipse cx="336.2" cy="330.8" rx="2.5" ry="1.3" transform="rotate(45 336.2 330.8)"/>
<ellipse cx="298.2" cy="342.8" rx="2.8" ry="1.5" transform="rotate(45 298.2 342.8)"/>
<ellipse cx="376" cy="329" rx="2.7" ry="1.5" transform="rotate(45 376 329)"/>
</g>
<rect x="885" y="56" width="5" height="5" fill="#c4c4c4"/>
<rect x="944" y="80" width="6" height="8" fill="#707070"/>
<g fill="#fff">
<polygon points="267,272 274,280 267,286"/>
<polygon points="171,413 176,404 181,413"/>
<polygon points="388,592 401,592 394,604"/>
<polygon points="629,392 632,385 636,392"/>
<polygon points="1032,662 1040,662 1037,670"/>
<polygon points="398,130 404,134 399,138"/>
<polygon points="473,134 478,138 473,142"/>
</g>
<g fill="#fff" stroke="#00f" stroke-width="3" stroke-linejoin="round">
<polygon points="469,381.5 477.5,389 488,392 481,401.4 478.5,413.5 470.5,405 460.5,401 467,392.5"/>
<polygon points="604.5,396 615.5,396 612,401 612,421 616,426.5 604,426.5 608,421 608,401"/>
<polygon points="781,435.6 787,437 798,437 804.5,435.6 807.3,440 811.4,451 817,460.5 804,469 799,478.5 801,491 806,500.7 796,509 788.4,516 781.8,505 774,500 763,500.7 766.6,492.4 767.7,482.7 764.3,470.2 775,465 781.8,460.5 781,448"/>
<polygon points="237,768 249,770 243,783 240,796 227,794 234,781"/>
</g>
</svg>
<div class="a f3o" style="left:1262px;top:30px;width:322px;height:133px;"></div>
<div class="a f3i" style="left:1265px;top:33px;width:317px;height:128px;"></div>
<div class="a gb" style="left:1270px;top:41px;width:309px;height:116px;"></div>
<div class="a t" style="left:1386.5px;top:37px;background:#f0f0f0;padding:0 2px;white-space:nowrap">添加单个颗粒</div>
<div class="a " style="left:1333px;top:50px;width:188px;height:77px;border:1px solid #fff"></div>
<div class="a t " style="left:1338px;top:59px;">点数</div>
<div class="a ed" style="left:1365px;top:55px;width:18px;height:20px;"><div class="t" style="text-align:center;margin-top:3px"><span class="l">10</span></div></div>
<div class="a spb" style="left:1385px;top:56px;width:15px;height:8px;"></div>
<div class="a" style="left:1389.5px;top:58.5px;border-left:3px solid transparent;border-right:3px solid transparent;border-bottom:3px solid #000"></div>
<div class="a spb" style="left:1385px;top:65px;width:15px;height:9px;"></div>
<div class="a" style="left:1389.5px;top:68px;border-left:3px solid transparent;border-right:3px solid transparent;border-top:3px solid #000"></div>
<div class="a t " style="left:1414px;top:59px;">插值</div>
<div class="a " style="left:1441px;top:55px;width:77px;height:20px;background:#e1e1e1;border:1px solid #adadad"><div class="t" style="margin:3px 0 0 3px">样条曲线</div></div>
<svg class="a" style="left:1503px;top:62px" width="10" height="6" viewBox="0 0 10 6"><path d="M0.5 0.5 L5 5 L9.5 0.5" stroke="#333" stroke-width="1" fill="none"/></svg>
<div class="a t " style="left:1338px;top:84px;">线宽</div>
<div class="a ed" style="left:1365px;top:80px;width:18px;height:20px;"><div class="t" style="text-align:center;margin-top:3px"><span class="l">1</span></div></div>
<div class="a spb" style="left:1385px;top:81px;width:15px;height:8px;"></div>
<div class="a" style="left:1389.5px;top:83.5px;border-left:3px solid transparent;border-right:3px solid transparent;border-bottom:3px solid #000"></div>
<div class="a spb" style="left:1385px;top:90px;width:15px;height:9px;"></div>
<div class="a" style="left:1389.5px;top:93px;border-left:3px solid transparent;border-right:3px solid transparent;border-top:3px solid #000"></div>
<div class="a t " style="left:1414px;top:82px;">颜色</div>
<div class="a " style="left:1441px;top:82px;width:17px;height:12px;background:#008000;border:1px solid #fff;border-right-color:#696969;border-bottom-color:#696969;box-shadow:inset 1px 1px 0 #e0e0e0"></div>
<div class="a " style="left:1461px;top:79px;width:57px;height:20px;background:#fff;border:1px solid #7a7a7a"><div class="t" style="margin:3px 0 0 2px">暗绿</div></div>
<svg class="a" style="left:1503px;top:86px" width="10" height="6" viewBox="0 0 10 6"><path d="M0.5 0.5 L5 5 L9.5 0.5" stroke="#333" stroke-width="1" fill="none"/></svg>
<div class="a chk" style="left:1338px;top:107px;width:13px;height:13px;"></div>
<div class="a t " style="left:1354px;top:108px;">样点</div>
<div class="a btn foc" style="left:1462px;top:104px;width:33px;height:19px;line-height:18px;">放弃</div>
<div class="a btn" style="left:1498px;top:104px;width:19px;height:19px;line-height:20px;font-weight:bold"><span class="l">?</span></div>
<div class="a f3o" style="left:1263px;top:170px;width:321px;height:80px;"></div>
<div class="a f3i" style="left:1266px;top:173px;width:316px;height:75px;"></div>
<div class="a gb" style="left:1271px;top:181px;width:308px;height:64px;"></div>
<div class="a t" style="left:1387px;top:177px;background:#f0f0f0;padding:0 2px;white-space:nowrap">快速添删颗粒</div>
<div class="a rad" style="left:1285.5px;top:207px;width:13px;height:13px;"><div class="dot"></div></div>
<div class="a t " style="left:1302px;top:208px;">单颗</div>
<div class="a rad" style="left:1374.5px;top:207px;width:13px;height:13px;"></div>
<div class="a t " style="left:1391px;top:208px;">选区</div>
<div class="a chk" style="left:1462px;top:207px;width:13px;height:13px;"></div>
<div class="a t " style="left:1478px;top:208px;">添删提示</div>
<div class="a f3o" style="left:1262px;top:260px;width:322px;height:571px;"></div>
<div class="a f3i" style="left:1265px;top:263px;width:317px;height:566px;"></div>
<div class="a gb" style="left:1270px;top:271px;width:309px;height:553px;"></div>
<div class="a t" style="left:1386.5px;top:267px;background:#f0f0f0;padding:0 2px;white-space:nowrap">分割控制参数</div>
<div class="a gb" style="left:1290px;top:296px;width:264px;height:51px;"></div>
<div class="a t" style="left:1296px;top:292px;background:#f0f0f0;padding:0 2px;white-space:nowrap">图像类型</div>
<div class="a rad" style="left:1323.5px;top:320px;width:13px;height:13px;"><div class="dot"></div></div>
<div class="a t " style="left:1340px;top:321px;">普通</div>
<div class="a rad" style="left:1438.5px;top:320px;width:13px;height:13px;"></div>
<div class="a t " style="left:1455px;top:321px;">白圆</div>
<div class="a gb" style="left:1290px;top:369px;width:264px;height:51px;"></div>
<div class="a t" style="left:1296px;top:365px;background:#f0f0f0;padding:0 2px;white-space:nowrap">颗粒颜色</div>
<div class="a rad" style="left:1323.5px;top:392px;width:13px;height:13px;"><div class="dot"></div></div>
<div class="a t " style="left:1340px;top:393px;">深色</div>
<div class="a rad" style="left:1438.5px;top:392px;width:13px;height:13px;"></div>
<div class="a t " style="left:1455px;top:393px;">浅色</div>
<div class="a gb" style="left:1285px;top:437px;width:271px;height:199px;"></div>
<div class="a t" style="left:1340px;top:433px;background:#f0f0f0;padding:0 2px;white-space:nowrap">搜索阈值<span class="l">(</span>长度<span class="mu">μ</span><span class="l">m|</span>面积<span class="mu">μ</span><span class="l">m2)</span></div>
<div class="a t " style="left:1094px;top:462px;width:300px;text-align:right;">最小面积</div>
<div class="a ed" style="left:1400px;top:456px;width:113px;height:25px;"><div class="t" style="text-align:center;margin-top:2px"><span class="l">10</span></div></div>
<div class="a spb" style="left:1516px;top:458px;width:24px;height:10px;"></div>
<div class="a" style="left:1525px;top:461.5px;border-left:3px solid transparent;border-right:3px solid transparent;border-bottom:3px solid #000"></div>
<div class="a spb" style="left:1516px;top:469px;width:24px;height:11px;"></div>
<div class="a" style="left:1525px;top:473px;border-left:3px solid transparent;border-right:3px solid transparent;border-top:3px solid #000"></div>
<div class="a t " style="left:1094px;top:492px;width:300px;text-align:right;">最大面积</div>
<div class="a ed" style="left:1400px;top:486px;width:113px;height:25px;"><div class="t" style="text-align:center;margin-top:2px"><span class="l">150</span></div></div>
<div class="a spb" style="left:1516px;top:488px;width:24px;height:10px;"></div>
<div class="a" style="left:1525px;top:491.5px;border-left:3px solid transparent;border-right:3px solid transparent;border-bottom:3px solid #000"></div>
<div class="a spb" style="left:1516px;top:499px;width:24px;height:11px;"></div>
<div class="a" style="left:1525px;top:503px;border-left:3px solid transparent;border-right:3px solid transparent;border-top:3px solid #000"></div>
<div class="a t " style="left:1094px;top:521px;width:300px;text-align:right;">阈值</div>
<div class="a ed" style="left:1400px;top:515px;width:113px;height:25px;"><div class="t" style="text-align:center;margin-top:2px"><span class="l">145</span></div></div>
<div class="a spb" style="left:1516px;top:517px;width:24px;height:10px;"></div>
<div class="a" style="left:1525px;top:520.5px;border-left:3px solid transparent;border-right:3px solid transparent;border-bottom:3px solid #000"></div>
<div class="a spb" style="left:1516px;top:528px;width:24px;height:11px;"></div>
<div class="a" style="left:1525px;top:532px;border-left:3px solid transparent;border-right:3px solid transparent;border-top:3px solid #000"></div>
<div class="a chk" style="left:1294px;top:547px;width:13px;height:13px;"></div>
<div class="a t " style="left:1310px;top:548px;">直径范围</div>
<div class="a t " style="left:1094px;top:576px;width:300px;text-align:right;color:#8c8c8c">最小直径</div>
<div class="a ed dis" style="left:1400px;top:570px;width:113px;height:23px;"><div class="t" style="text-align:center;margin-top:0px"><span class="l">5</span></div></div>
<div class="a spb" style="left:1516px;top:571px;width:24px;height:9.5px;"></div>
<div class="a" style="left:1525px;top:574.25px;border-left:3px solid transparent;border-right:3px solid transparent;border-bottom:3px solid #a0a0a0"></div>
<div class="a spb" style="left:1516px;top:581.5px;width:24px;height:10.5px;"></div>
<div class="a" style="left:1525px;top:585.25px;border-left:3px solid transparent;border-right:3px solid transparent;border-top:3px solid #a0a0a0"></div>
<div class="a t " style="left:1094px;top:605px;width:300px;text-align:right;color:#8c8c8c">最大直径</div>
<div class="a ed dis" style="left:1400px;top:599px;width:113px;height:23px;"><div class="t" style="text-align:center;margin-top:0px"><span class="l">15</span></div></div>
<div class="a spb" style="left:1516px;top:600px;width:24px;height:9.5px;"></div>
<div class="a" style="left:1525px;top:603.25px;border-left:3px solid transparent;border-right:3px solid transparent;border-bottom:3px solid #a0a0a0"></div>
<div class="a spb" style="left:1516px;top:610.5px;width:24px;height:10.5px;"></div>
<div class="a" style="left:1525px;top:614.25px;border-left:3px solid transparent;border-right:3px solid transparent;border-top:3px solid #a0a0a0"></div>
<div class="a gb" style="left:1285px;top:660px;width:271px;height:55px;"></div>
<div class="a t" style="left:1300px;top:656px;background:#f0f0f0;padding:0 27px;white-space:nowrap">最小分割弧长</div>
<div class="a ed" style="left:1351px;top:676px;width:56px;height:25px;"><div class="t" style="text-align:center;margin-top:2px"><span class="l">10</span></div></div>
<div class="a spb" style="left:1411px;top:678px;width:25px;height:10px;"></div>
<div class="a" style="left:1420.5px;top:681.5px;border-left:3px solid transparent;border-right:3px solid transparent;border-bottom:3px solid #000"></div>
<div class="a spb" style="left:1411px;top:689px;width:25px;height:11px;"></div>
<div class="a" style="left:1420.5px;top:693px;border-left:3px solid transparent;border-right:3px solid transparent;border-top:3px solid #000"></div>
<div class="a t " style="left:1441px;top:682px;">像素</div>
<div class="a chk" style="left:1294px;top:736px;width:13px;height:13px;"><svg width="11" height="11" viewBox="0 0 11 11" style="display:block"><path d="M1.5 5.5 L4.2 8.3 L9.5 2" fill="none" stroke="#000" stroke-width="1.3"/></svg></div>
<div class="a t " style="left:1309px;top:737px;">含边界颗粒</div>
<div class="a btn" style="left:1457px;top:729px;width:98px;height:27px;line-height:28px;">初值</div>
<div class="a btn foc" style="left:1286px;top:774px;width:107px;height:43px;line-height:42px;">搜索</div>
<div class="a btn" style="left:1401px;top:774px;width:108px;height:43px;line-height:44px;">分割</div>
<div class="a btn" style="left:1520px;top:774px;width:35px;height:43px;line-height:44px;font-size:10px"><span class="l">?</span></div>
<div class="a " style="left:1590px;top:29px;width:323px;height:174px;background:#fff;border-top:1px solid #696969;border-left:1px solid #696969"></div>
<div class="a " style="left:1590px;top:207px;width:323px;height:173px;background:#fff;border-top:1px solid #696969;border-left:1px solid #696969"></div>
<div class="a gb" style="left:1591px;top:395px;width:321px;height:87px;"></div>
<div class="a t" style="left:1731.5px;top:391px;background:#f0f0f0;padding:0 2px;white-space:nowrap">统计图</div>
<div class="a t " style="left:1693px;top:421px;">区间长</div>
<div class="a ed" style="left:1741px;top:415px;width:51px;height:25px;"><div class="t" style="text-align:center;margin-top:2px"><span class="l">5</span></div></div>
<div class="a spb" style="left:1794px;top:416px;width:25px;height:10.5px;"></div>
<div class="a" style="left:1803.5px;top:419.75px;border-left:3px solid transparent;border-right:3px solid transparent;border-bottom:3px solid #000"></div>
<div class="a spb" style="left:1794px;top:427.5px;width:25px;height:11.5px;"></div>
<div class="a" style="left:1803.5px;top:431.75px;border-left:3px solid transparent;border-right:3px solid transparent;border-top:3px solid #000"></div>
<div class="a t " style="left:1663px;top:453px;">区间数</div>
<div class="a " style="left:1713px;top:448px;width:154px;height:22px;background:#ffd2d2;border:1px solid #e8baba;border-right-color:#fff;border-bottom-color:#fff"></div>
<div class="a gb" style="left:1591px;top:503px;width:321px;height:70px;"></div>
<div class="a t" style="left:1686.5px;top:499px;background:#f0f0f0;padding:0 2px;white-space:nowrap">硬件参数（微米<span class="l">/</span>像素）</div>
<div class="a t " style="left:1433px;top:528px;width:300px;text-align:right;"><span class="l">X</span>分辨率</div>
<div class="a sunk" style="left:1741px;top:519px;width:165px;height:21px;"><div class="t" style="text-align:center;margin-top:0px"><span class="l">0.316556</span></div></div>
<div class="a t " style="left:1433px;top:554px;width:300px;text-align:right;"><span class="l">Y</span>分辨率</div>
<div class="a sunk" style="left:1741px;top:545px;width:165px;height:21px;"><div class="t" style="text-align:center;margin-top:0px"><span class="l">0.316456</span></div></div>
<div class="a gb" style="left:1591px;top:588px;width:321px;height:103px;"></div>
<div class="a t" style="left:1725.5px;top:584px;background:#f0f0f0;padding:0 2px;white-space:nowrap">分析信息</div>
<div class="a t " style="left:1433px;top:611px;width:300px;text-align:right;">图像面积</div>
<div class="a sunk" style="left:1741px;top:605px;width:165px;height:21px;"><div class="t" style="text-align:center;margin-top:0px"><span class="l">30774.081 </span><span class="mu">μ</span><span class="l">m2</span></div></div>
<div class="a t " style="left:1433px;top:637px;width:300px;text-align:right;">颗粒面积总和</div>
<div class="a sunk" style="left:1741px;top:631px;width:165px;height:21px;"><div class="t" style="text-align:center;margin-top:0px"><span class="l">12603.649 </span><span class="mu">μ</span><span class="l">m2</span></div></div>
<div class="a t " style="left:1433px;top:663px;width:300px;text-align:right;">颗粒面积百分比</div>
<div class="a sunk" style="left:1741px;top:657px;width:165px;height:21px;"><div class="t" style="text-align:center;margin-top:0px"><span class="l">40.955%</span></div></div>
<div class="a gb" style="left:1589px;top:711px;width:155px;height:113px;"></div>
<div class="a t" style="left:1640.5px;top:707px;background:#f0f0f0;padding:0 2px;white-space:nowrap">图像显示</div>
<div class="a btn" style="left:1651px;top:744px;width:30px;height:15px;line-height:16px;line-height:15px">原图</div>
<div class="a " style="left:1651px;top:761px;width:30px;height:18px;background:#f0f0f0;border:1px solid #808080;border-right-color:#fff;border-bottom-color:#fff"><div class="t" style="text-align:center;margin-top:1px"><span class="l">166%</span></div></div>
<div class="a btn foc" style="left:1651px;top:780px;width:30px;height:16px;line-height:15px;line-height:14px">充满</div>
<div class="a" style="left:1632px;top:761px;width:18px;height:18px;background:#c0c0c0;border:1px solid #fff;border-right-color:#000;border-bottom-color:#000;box-shadow:inset -1px -1px 0 #808080"><svg width="16" height="16" viewBox="0 0 16 16" style="display:block"><circle cx="7" cy="6.5" r="4.6" fill="none" stroke="#000" stroke-width="1.2"/><path d="M3.6 4.2 A4 4 0 0 1 6 2.6 M8.2 10 A4 4 0 0 0 10.4 8.2" stroke="#0ff" stroke-width="1.2" fill="none"/><path d="M10.4 9.8 L14.2 13.6" stroke="#000" stroke-width="2.2"/><path d="M4.7 6.5 H9.3 M7 4.2 V8.8" stroke="#000" stroke-width="1.2" fill="none"/></svg></div>
<div class="a" style="left:1683px;top:761px;width:18px;height:18px;background:#c0c0c0;border:1px solid #fff;border-right-color:#000;border-bottom-color:#000;box-shadow:inset -1px -1px 0 #808080"><svg width="16" height="16" viewBox="0 0 16 16" style="display:block"><circle cx="7" cy="6.5" r="4.6" fill="none" stroke="#000" stroke-width="1.2"/><path d="M3.6 4.2 A4 4 0 0 1 6 2.6 M8.2 10 A4 4 0 0 0 10.4 8.2" stroke="#0ff" stroke-width="1.2" fill="none"/><path d="M10.4 9.8 L14.2 13.6" stroke="#000" stroke-width="2.2"/><path d="M4.7 6.5 H9.3 " stroke="#000" stroke-width="1.2" fill="none"/></svg></div>
<div class="a gb" style="left:1755px;top:711px;width:148px;height:113px;"></div>
<div class="a t" style="left:1803px;top:707px;background:#f0f0f0;padding:0 2px;white-space:nowrap">目标绘制</div>
<div class="a t " style="left:1779px;top:740px;">颜色</div>
<div class="a " style="left:1818px;top:736px;width:31px;height:20px;background:#ff0000;border:1px solid #888;border-right-color:#444;border-bottom-color:#444"></div>
<div class="a t " style="left:1779px;top:774px;">线宽</div>
<div class="a ed" style="left:1817px;top:768px;width:32px;height:25px;"><div class="t" style="text-align:center;margin-top:2px"><span class="l">2</span></div></div>
<div class="a spb" style="left:1852px;top:769px;width:24px;height:10.5px;"></div>
<div class="a" style="left:1861px;top:772.75px;border-left:3px solid transparent;border-right:3px solid transparent;border-bottom:3px solid #000"></div>
<div class="a spb" style="left:1852px;top:780.5px;width:24px;height:11.5px;"></div>
<div class="a" style="left:1861px;top:784.75px;border-left:3px solid transparent;border-right:3px solid transparent;border-top:3px solid #000"></div>
<div class="a " style="left:1266px;top:870px;width:312px;height:157px;border-top:2px solid #696969;border-left:2px solid #696969;border-right:1px solid #fff;border-bottom:1px solid #fff"></div>
<div class="a t " style="left:1267px;top:895px;"><span class="l">CV=S/</span><span class="mu">μ</span>乘以<span class="l">100%</span></div>
<div class="a t " style="left:1267px;top:919px;"><span class="l">s=6.690</span></div>
<div class="a t " style="left:1267px;top:943px;"><span class="l"> </span><span class="mu">μ</span><span class="l">=11.409</span></div>
<div class="a t " style="left:1267px;top:967px;"><span class="l">CV=58.641%</span></div>
<div class="a btn" style="left:1614px;top:886px;width:97px;height:35px;line-height:36px;">装入图像</div>
<div class="a btn" style="left:1714px;top:886px;width:96px;height:35px;line-height:36px;">图像处理</div>
<div class="a btn" style="left:1813px;top:886px;width:97px;height:35px;line-height:36px;">列表单位</div>
<div class="a btn" style="left:1614px;top:923px;width:97px;height:35px;line-height:36px;">保存原图</div>
<div class="a btn" style="left:1714px;top:923px;width:96px;height:35px;line-height:36px;">打印报告</div>
<div class="a btn" style="left:1813px;top:923px;width:97px;height:35px;line-height:36px;">全部清除</div>
<div class="a btn" style="left:1614px;top:960px;width:97px;height:35px;line-height:36px;">存分析图</div>
<div class="a btn" style="left:1714px;top:960px;width:96px;height:35px;line-height:36px;">图像选区</div>
<div class="a btn" style="left:1813px;top:960px;width:97px;height:35px;line-height:36px;">存界面图</div>
<div class="a btn" style="left:1714px;top:997px;width:96px;height:35px;line-height:36px;">数据统计</div>
<div class="a btn" style="left:1813px;top:997px;width:97px;height:35px;line-height:36px;">结束</div>
<div class="a lb" style="left:8px;top:847px;width:542px;height:188px;"></div>
<div class="hs" style="left:54px;top:849px;height:23px;position:absolute"></div>
<div class="hs" style="left:130px;top:849px;height:23px;position:absolute"></div>
<div class="hs" style="left:219px;top:849px;height:23px;position:absolute"></div>
<div class="hs" style="left:279.5px;top:849px;height:23px;position:absolute"></div>
<div class="hs" style="left:339.5px;top:849px;height:23px;position:absolute"></div>
<div class="hs" style="left:399.5px;top:849px;height:23px;position:absolute"></div>
<div class="hs" style="left:454.5px;top:849px;height:23px;position:absolute"></div>
<div class="a t " style="left:15px;top:854px;">编号</div>
<div class="a t " style="left:-177px;top:854px;width:300px;text-align:right;">周长<span class="mu">μ</span><span class="l">m</span></div>
<div class="a t " style="left:-87px;top:854px;width:300px;text-align:right;">面积<span class="mu">μ</span><span class="l">m2</span></div>
<div class="a t " style="left:-27px;top:854px;width:300px;text-align:right;">长轴<span class="mu">μ</span><span class="l">m</span></div>
<div class="a t " style="left:33px;top:854px;width:300px;text-align:right;">短轴<span class="mu">μ</span><span class="l">m</span></div>
<div class="a t " style="left:93px;top:854px;width:300px;text-align:right;">直径<span class="mu">μ</span><span class="l">m</span></div>
<div class="a t " style="left:148px;top:854px;width:300px;text-align:right;">形状比</div>
<div class="a t " style="left:-261px;top:876px;width:300px;text-align:right;"><span class="l">11</span></div>
<div class="a t " style="left:-177px;top:876px;width:300px;text-align:right;"><span class="l">38.83</span></div>
<div class="a t " style="left:-87px;top:876px;width:300px;text-align:right;"><span class="l">100.88</span></div>
<div class="a t " style="left:-27px;top:876px;width:300px;text-align:right;"><span class="l">12.22</span></div>
<div class="a t " style="left:33px;top:876px;width:300px;text-align:right;"><span class="l">10.91</span></div>
<div class="a t " style="left:93px;top:876px;width:300px;text-align:right;"><span class="l">11.33</span></div>
<div class="a t " style="left:148px;top:876px;width:300px;text-align:right;"><span class="l">1.19</span></div>
<div class="a t " style="left:-261px;top:897px;width:300px;text-align:right;"><span class="l">12</span></div>
<div class="a t " style="left:-177px;top:897px;width:300px;text-align:right;"><span class="l">28.10</span></div>
<div class="a t " style="left:-87px;top:897px;width:300px;text-align:right;"><span class="l">57.60</span></div>
<div class="a t " style="left:-27px;top:897px;width:300px;text-align:right;"><span class="l">8.55</span></div>
<div class="a t " style="left:33px;top:897px;width:300px;text-align:right;"><span class="l">8.45</span></div>
<div class="a t " style="left:93px;top:897px;width:300px;text-align:right;"><span class="l">8.56</span></div>
<div class="a t " style="left:148px;top:897px;width:300px;text-align:right;"><span class="l">1.09</span></div>
<div class="a t " style="left:-261px;top:918px;width:300px;text-align:right;"><span class="l">13</span></div>
<div class="a t " style="left:-177px;top:918px;width:300px;text-align:right;"><span class="l">22.51</span></div>
<div class="a t " style="left:-87px;top:918px;width:300px;text-align:right;"><span class="l">37.77</span></div>
<div class="a t " style="left:-27px;top:918px;width:300px;text-align:right;"><span class="l">6.91</span></div>
<div class="a t " style="left:33px;top:918px;width:300px;text-align:right;"><span class="l">6.83</span></div>
<div class="a t " style="left:93px;top:918px;width:300px;text-align:right;"><span class="l">6.93</span></div>
<div class="a t " style="left:148px;top:918px;width:300px;text-align:right;"><span class="l">1.07</span></div>
<div class="a " style="left:10px;top:935px;width:445px;height:21px;background:#c00000"></div>
<div class="a t " style="left:-261px;top:939px;width:300px;text-align:right;color:#fff"><span class="l">14</span></div>
<div class="a t " style="left:-177px;top:939px;width:300px;text-align:right;color:#fff"><span class="l">538.73</span></div>
<div class="a t " style="left:-87px;top:939px;width:300px;text-align:right;color:#fff"><span class="l">1587.19</span></div>
<div class="a t " style="left:-27px;top:939px;width:300px;text-align:right;color:#fff"><span class="l">79.52</span></div>
<div class="a t " style="left:33px;top:939px;width:300px;text-align:right;color:#fff"><span class="l">47.22</span></div>
<div class="a t " style="left:93px;top:939px;width:300px;text-align:right;color:#fff"><span class="l">44.95</span></div>
<div class="a t " style="left:148px;top:939px;width:300px;text-align:right;color:#fff"><span class="l">14.55</span></div>
<div class="a t " style="left:-261px;top:960px;width:300px;text-align:right;"><span class="l">15</span></div>
<div class="a t " style="left:-177px;top:960px;width:300px;text-align:right;"><span class="l">17.40</span></div>
<div class="a t " style="left:-87px;top:960px;width:300px;text-align:right;"><span class="l">13.52</span></div>
<div class="a t " style="left:-27px;top:960px;width:300px;text-align:right;"><span class="l">6.28</span></div>
<div class="a t " style="left:33px;top:960px;width:300px;text-align:right;"><span class="l">4.27</span></div>
<div class="a t " style="left:93px;top:960px;width:300px;text-align:right;"><span class="l">4.15</span></div>
<div class="a t " style="left:148px;top:960px;width:300px;text-align:right;"><span class="l">1.78</span></div>
<div class="a t " style="left:-261px;top:981px;width:300px;text-align:right;"><span class="l">16</span></div>
<div class="a t " style="left:-177px;top:981px;width:300px;text-align:right;"><span class="l">40.06</span></div>
<div class="a t " style="left:-87px;top:981px;width:300px;text-align:right;"><span class="l">77.24</span></div>
<div class="a t " style="left:-27px;top:981px;width:300px;text-align:right;"><span class="l">14.01</span></div>
<div class="a t " style="left:33px;top:981px;width:300px;text-align:right;"><span class="l">7.81</span></div>
<div class="a t " style="left:93px;top:981px;width:300px;text-align:right;"><span class="l">9.92</span></div>
<div class="a t " style="left:148px;top:981px;width:300px;text-align:right;"><span class="l">1.65</span></div>
<div class="a t " style="left:-261px;top:1002px;width:300px;text-align:right;"><span class="l">17</span></div>
<div class="a t " style="left:-177px;top:1002px;width:300px;text-align:right;"><span class="l">230.88</span></div>
<div class="a t " style="left:-87px;top:1002px;width:300px;text-align:right;"><span class="l">580.52</span></div>
<div class="a t " style="left:-27px;top:1002px;width:300px;text-align:right;"><span class="l">52.49</span></div>
<div class="a t " style="left:33px;top:1002px;width:300px;text-align:right;"><span class="l">33.71</span></div>
<div class="a t " style="left:93px;top:1002px;width:300px;text-align:right;"><span class="l">27.19</span></div>
<div class="a t " style="left:148px;top:1002px;width:300px;text-align:right;"><span class="l">7.31</span></div>
<div class="a t " style="left:-261px;top:1023px;width:300px;text-align:right;"><span class="l">18</span></div>
<div class="a t " style="left:-177px;top:1023px;width:300px;text-align:right;"><span class="l">26.01</span></div>
<div class="a t " style="left:-87px;top:1023px;width:300px;text-align:right;"><span class="l">49.29</span></div>
<div class="a t " style="left:-27px;top:1023px;width:300px;text-align:right;"><span class="l">7.97</span></div>
<div class="a t " style="left:33px;top:1023px;width:300px;text-align:right;"><span class="l">7.77</span></div>
<div class="a t " style="left:93px;top:1023px;width:300px;text-align:right;"><span class="l">7.92</span></div>
<div class="a t " style="left:148px;top:1023px;width:300px;text-align:right;"><span class="l">1.09</span></div>
<div class="a " style="left:531px;top:848px;width:18px;height:186px;background:#f0f0f0"></div>
<div class="a " style="left:532px;top:881px;width:15px;height:17px;background:#cdcdcd"></div>
<svg class="a" style="left:535px;top:853px" width="10" height="6" viewBox="0 0 10 6"><path d="M1 5 L5 1 L9 5" stroke="#606060" stroke-width="1.4" fill="none"/></svg>
<svg class="a" style="left:535px;top:1021px" width="10" height="6" viewBox="0 0 10 6"><path d="M1 1 L5 5 L9 1" stroke="#606060" stroke-width="1.4" fill="none"/></svg>
<div class="a " style="left:8px;top:847px;width:542px;height:188px;border:1px solid #828790"></div>
<div class="a btn" style="left:559px;top:847px;width:83px;height:35px;"><div class="t" style="margin-top:6px">加入统计</div><div class="t ar" style="margin-top:-5px">→</div></div>
<div class="a btn" style="left:559px;top:888px;width:83px;height:35px;line-height:36px;">清空<span class="ar">→</span></div>
<div class="a btn" style="left:860px;top:836px;width:83px;height:27px;line-height:28px;"><span class="l">Excel </span><span class="ar">↓</span></div>
<div class="a btn" style="left:1167px;top:838px;width:84px;height:26px;line-height:27px;"><span class="l">Excel </span><span class="ar">↓</span></div>
<div class="a lb" style="left:649px;top:866px;width:298px;height:167px;"></div>
<div class="hs" style="left:695px;top:868px;height:23px;position:absolute"></div>
<div class="hs" style="left:770px;top:868px;height:23px;position:absolute"></div>
<div class="hs" style="left:860px;top:868px;height:23px;position:absolute"></div>
<div class="hs" style="left:920px;top:868px;height:23px;position:absolute"></div>
<div class="a t " style="left:657px;top:874px;">编号</div>
<div class="a t " style="left:463px;top:874px;width:300px;text-align:right;">周长</div>
<div class="a t " style="left:554px;top:874px;width:300px;text-align:right;">面积</div>
<div class="a t " style="left:614px;top:874px;width:300px;text-align:right;">长轴</div>
<div class="a " style="left:650px;top:1015px;width:296px;height:16px;background:#f0f0f0"></div>
<div class="a " style="left:668px;top:1015px;width:172px;height:15px;background:#cdcdcd"></div>
<svg class="a" style="left:655px;top:1018px" width="6" height="10" viewBox="0 0 6 10"><path d="M5 1 L1 5 L5 9" stroke="#606060" stroke-width="1.4" fill="none"/></svg>
<svg class="a" style="left:934px;top:1018px" width="6" height="10" viewBox="0 0 6 10"><path d="M1 1 L5 5 L1 9" stroke="#606060" stroke-width="1.4" fill="none"/></svg>
<div class="a lb" style="left:957px;top:866px;width:298px;height:167px;"></div>
<div class="hs" style="left:1078px;top:868px;height:23px;position:absolute"></div>
<div class="hs" style="left:1178.5px;top:868px;height:23px;position:absolute"></div>
<div class="a t " style="left:965px;top:874px;">栏目</div>
<div class="a t " style="left:872px;top:874px;width:300px;text-align:right;">数据</div>
<div class="a t " style="left:965px;top:896px;">颗粒面积百分比</div>
<div class="a t " style="left:965px;top:917px;">颗粒数<span class="l">/</span>平方毫米</div>
<div class="a t " style="left:965px;top:938px;">颗粒总数</div>
<div class="a t " style="left:965px;top:959px;">颗粒平均直径</div>
<div class="a t " style="left:965px;top:980px;">最大直径</div>
<div class="a t " style="left:965px;top:1001px;">最小直径</div>
<div class="a " style="left:1237px;top:867px;width:17px;height:165px;background:#f0f0f0"></div>
<div class="a " style="left:1238px;top:937px;width:15px;height:77px;background:#cdcdcd"></div>
<svg class="a" style="left:1240px;top:873px" width="10" height="6" viewBox="0 0 10 6"><path d="M1 5 L5 1 L9 5" stroke="#606060" stroke-width="1.4" fill="none"/></svg>
<svg class="a" style="left:1240px;top:1019px" width="10" height="6" viewBox="0 0 10 6"><path d="M1 1 L5 5 L9 1" stroke="#606060" stroke-width="1.4" fill="none"/></svg>
<div class="a " style="left:1910px;top:248px;width:10px;height:59px;background:#4a5262;border-radius:3px 0 0 3px;border:1px solid #3a4050"><div style="position:absolute;left:3px;top:6px;width:5px;height:24px;background:repeating-linear-gradient(#2a2e38 0 1px,#4a5262 1px 2px)"></div><div style="position:absolute;left:3px;top:30px;width:5px;height:22px;background:repeating-linear-gradient(#b8d860 0 1px,#4a5262 1px 2px)"></div><div style="position:absolute;left:3px;top:42px;width:5px;height:10px;background:repeating-linear-gradient(#50e0c0 0 1px,#4a5262 1px 2px)"></div></div>
</body></html>
